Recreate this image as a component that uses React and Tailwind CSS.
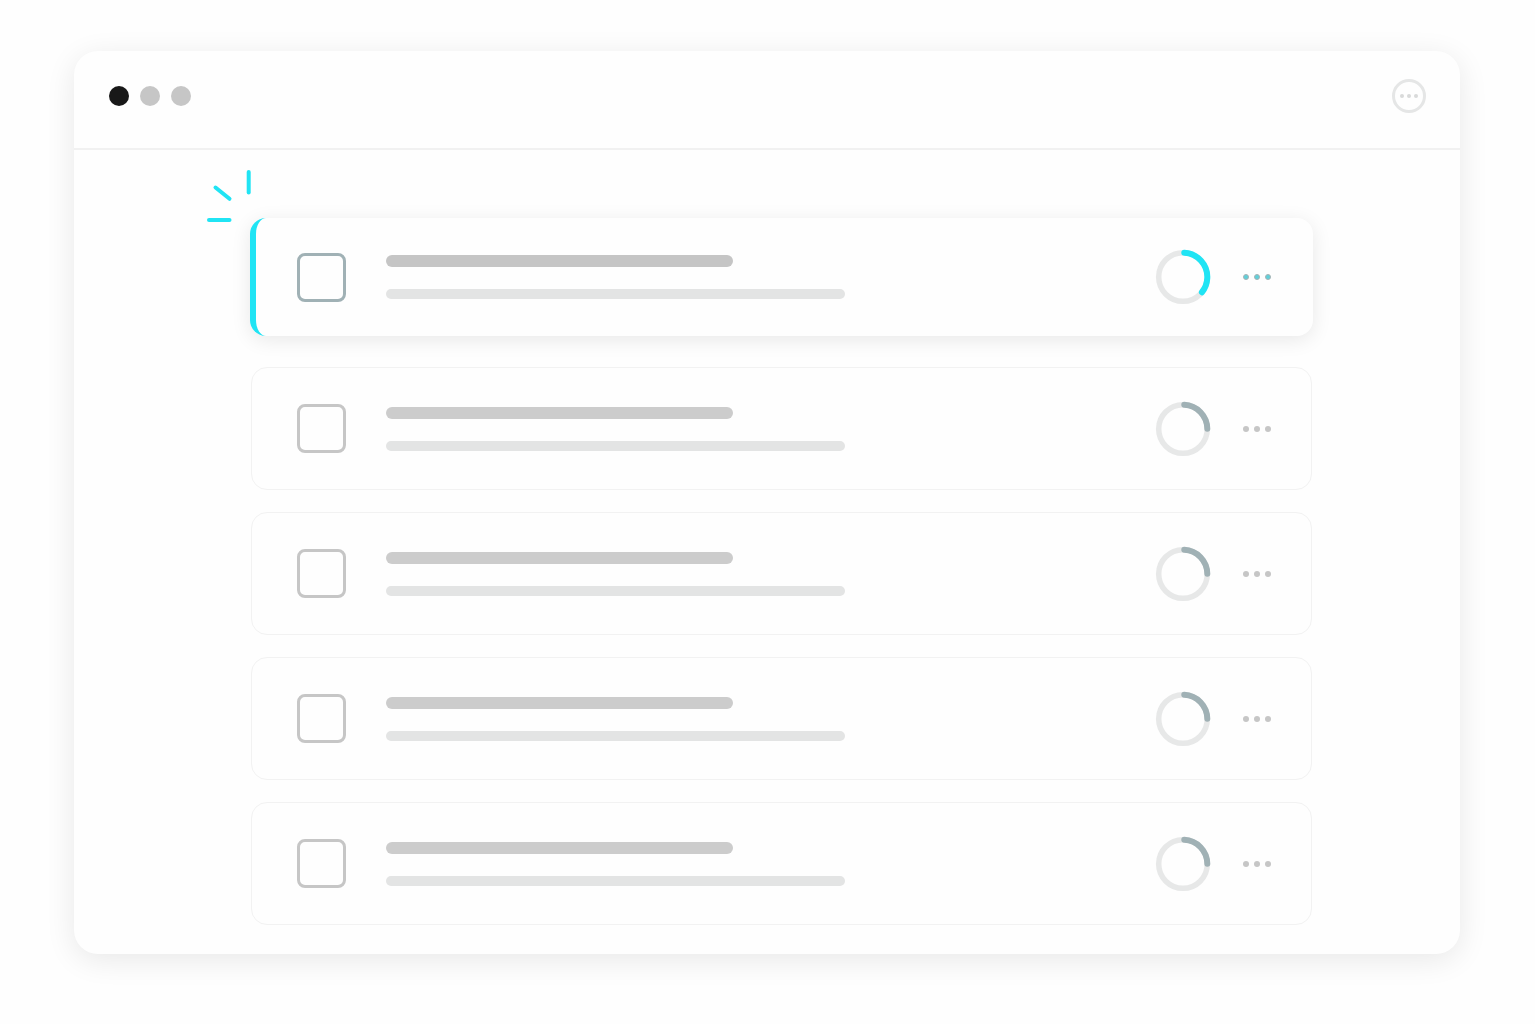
import React, { useState } from 'react'

const initialTasks = [
  { id: 1, progress: 36, active: true },
  { id: 2, progress: 25, active: false },
  { id: 3, progress: 25, active: false },
  { id: 4, progress: 25, active: false },
  { id: 5, progress: 25, active: false }
]

function ProgressRing({ value, active }) {
  return (
    <svg className="size-14 shrink-0" viewBox="0 0 56 56" fill="none" role="progressbar" aria-valuenow={value} aria-valuemin={0} aria-valuemax={100} aria-label="Task progress">
      <circle cx="28" cy="28" r="24.3" strokeWidth="5.5" className="stroke-[#e7e8e8]" />
      <circle
        cx="28"
        cy="28"
        r="24.3"
        strokeWidth="6"
        strokeLinecap="round"
        pathLength="100"
        strokeDasharray={`${value - 1} 200`}
        transform="rotate(-87 28 28)"
        className={active ? 'stroke-[#20e4f4]' : 'stroke-[#a0b1b5]'}
      />
    </svg>
  )
}

function MoreButton({ active }) {
  return (
    <button type="button" aria-label="Task options" className="flex gap-[5px] p-1 cursor-pointer">
      {[0, 1, 2].map((dot) => (
        <span key={dot} className={`size-1.5 rounded-full ${active ? 'bg-[#5fd0da] border border-[#a9b2b4]' : 'bg-[#c6c6c6]'}`}></span>
      ))}
    </button>
  )
}

function Spark() {
  return (
    <svg className="absolute -left-12 -top-[50px] w-14 h-14 stroke-[#20e4f4]" viewBox="0 0 56 56" fill="none" strokeWidth="4" strokeLinecap="round" aria-hidden="true">
      <path d="M46.7 4V24.5" />
      <path d="M13.5 19.5L27.5 30.8" />
      <path d="M7 52H27.5" />
    </svg>
  )
}

function TaskRow({ task, done, onToggle }) {
  const { active } = task

  return (
    <li className={active ? 'relative -mx-px mb-[9px]' : 'relative'}>
      {active && <Spark />}
      <div
        className={`flex items-center ${
          active
            ? 'h-[118px] pl-[41px] pr-[38px] rounded-2xl border-l-6 border-[#20e4f4] bg-[#fefefe] shadow-[0_4px_20px_rgba(0,0,0,0.09)]'
            : 'h-[123px] pl-[45px] pr-9 rounded-2xl border border-[#f2f2f2]'
        }`}
      >
        <input
          type="checkbox"
          aria-label={`Task ${task.id}`}
          checked={done}
          onChange={onToggle}
          className={`appearance-none shrink-0 size-[49px] rounded-lg border-3 cursor-pointer checked:bg-gray-200 ${active ? 'border-[#a0b1b5]' : 'border-[#c6c6c6]'}`}
        />

        {/* Title and description */}
        <div className="flex-1 min-w-0 ml-10 space-y-[22px]">
          <div className={`h-3 w-full max-w-[347px] rounded-full ${active ? 'bg-[#c5c5c5]' : 'bg-[#cccccc]'}`}></div>
          <div className="h-2.5 w-full max-w-[459px] rounded-full bg-[#e3e4e4]"></div>
        </div>

        <div className="flex items-center gap-7">
          <ProgressRing value={task.progress} active={active} />
          <MoreButton active={active} />
        </div>
      </div>
    </li>
  )
}

function App() {
  const [doneIds, setDoneIds] = useState([])

  const toggleTask = (id) => {
    setDoneIds((ids) => (ids.includes(id) ? ids.filter((i) => i !== id) : [...ids, id]))
  }

  return (
    <div className="min-h-screen bg-[#fefefe] pl-[74px] pr-[75px] pt-[51px] pb-[71px] font-['Inter',sans-serif]">
      <main className="rounded-3xl bg-[#fefefe] shadow-[0_6px_30px_rgba(0,0,0,0.09)]">
        {/* Title bar */}
        <header className="flex items-center justify-between pl-[35px] pr-[34px] pt-7 pb-[35px] border-b-2 border-[#f1f1f1]">
          <div className="flex gap-[11px]">
            <span className="size-5 rounded-full bg-[#181818]"></span>
            <span className="size-5 rounded-full bg-[#c6c6c6]"></span>
            <span className="size-5 rounded-full bg-[#c6c6c6]"></span>
          </div>
          <button type="button" aria-label="Window menu" className="size-[34px] rounded-full border-3 border-[#e5e6e6] flex items-center justify-center gap-[3px] cursor-pointer">
            <span className="size-1 rounded-full bg-[#d9dada]"></span>
            <span className="size-1 rounded-full bg-[#d9dada]"></span>
            <span className="size-1 rounded-full bg-[#d9dada]"></span>
          </button>
        </header>

        {/* Task list */}
        <ul className="flex flex-col gap-[22px] pl-[177px] pr-[148px] pt-[68px] pb-[29px]">
          {initialTasks.map((task) => (
            <TaskRow key={task.id} task={task} done={doneIds.includes(task.id)} onToggle={() => toggleTask(task.id)} />
          ))}
        </ul>
      </main>
    </div>
  )
}

export default App
